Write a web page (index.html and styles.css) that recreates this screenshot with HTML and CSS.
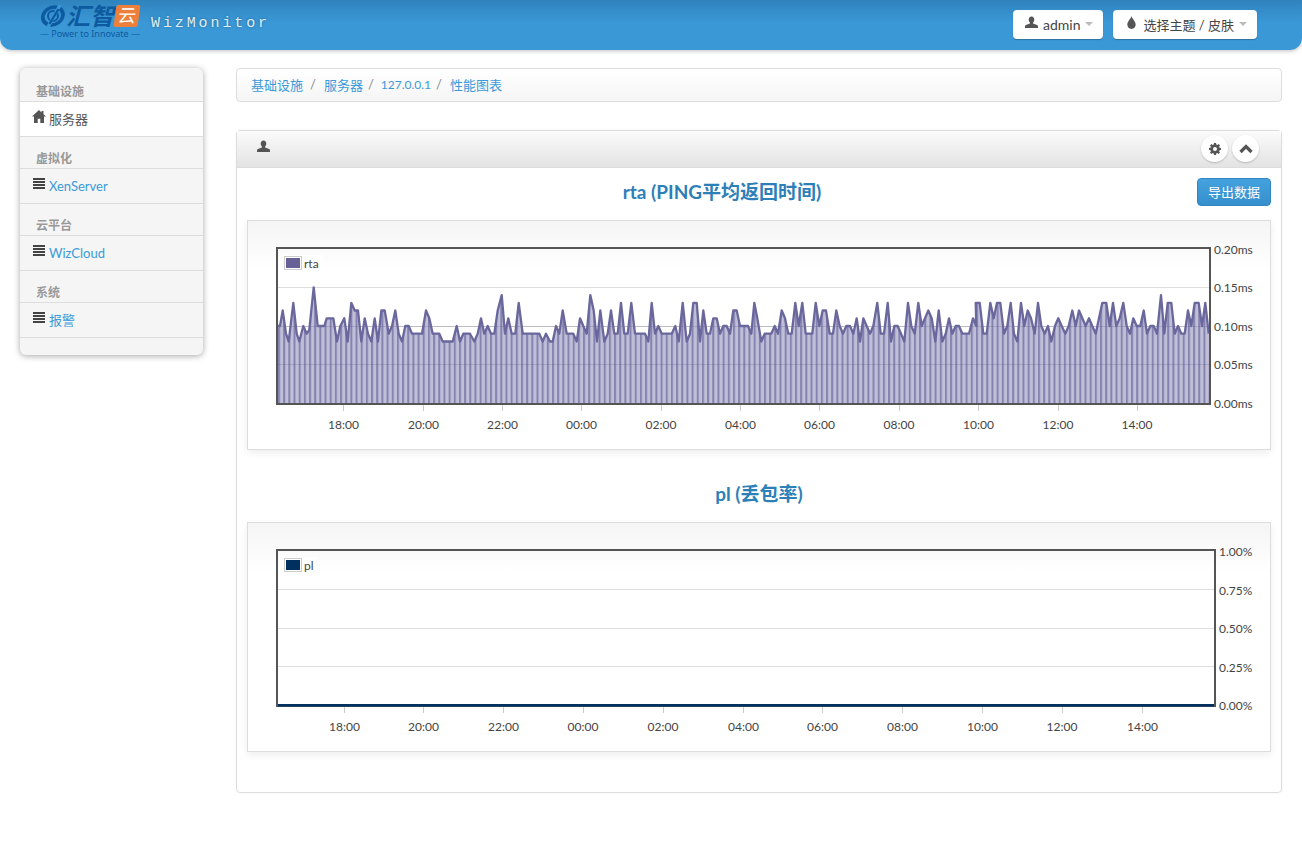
FILE: index.html
```html
<!DOCTYPE html>
<html lang="zh">
<head>
<meta charset="utf-8">
<title>WizMonitor</title>
<link rel="stylesheet" href="styles.css">
</head>
<body>
<header class="topbar">
  <div class="brand">
    <div class="logo">
      <div class="logo-top">
        <svg class="logo-mark" viewBox="0 0 26 24"><ellipse cx="13" cy="12" rx="10" ry="9" fill="none" stroke="#0d5aa0" stroke-width="3.600" transform="skewX(-10) translate(2 0)"/><ellipse cx="13" cy="12" rx="5" ry="5" fill="none" stroke="#0d5aa0" stroke-width="2"/><path d="M20 1 L8 23" stroke="#3b97d6" stroke-width="3.400"/><path d="M18.500 5 L9.500 20" stroke="#0d5aa0" stroke-width="2.400"/></svg>
        <span class="logo-name">汇智</span>
        <span class="logo-cloud">云</span>
      </div>
      <div class="logo-tag">— Power to Innovate —</div>
    </div>
    <span class="app-name">WizMonitor</span>
  </div>
  <div class="top-actions">
    <button class="top-btn">
      <svg class="ico" viewBox="0 0 14 14"><path d="M7 0.5c-2 0-3 1.500-3 3.300 0 1.300.6 2.500 1.300 3.200v1.200L1 9.800c-.6.300-1 .8-1 1.500V13h14v-1.700c0-.7-.4-1.200-1-1.500L8.700 8.200V7C9.400 6.300 10 5.100 10 3.800 10 2 9 .5 7 .5z"/></svg>
      <span>admin</span><i class="caret"></i>
    </button>
    <button class="top-btn">
      <svg class="ico" viewBox="0 0 14 14"><path d="M7 0C6.500 2.500 2.500 6 2.500 9.200 2.500 11.800 4.500 14 7 14s4.500-2.200 4.500-4.800C11.500 6 7.500 2.500 7 0z"/></svg>
      <span class="theme-label">选择主题 / 皮肤</span><i class="caret"></i>
    </button>
  </div>
</header>

<div class="page">
  <aside class="sidebar">
    <div class="nav-head">基础设施</div>
    <a class="nav-item active cjk"><svg class="ico-home" viewBox="0 0 14 13"><path d="M7 0L0 6.500h2V13h3.700V8.800h2.600V13H12V6.500h2L11.500 4.200V1h-2v1.400z"/></svg>服务器</a>
    <div class="nav-head">虚拟化</div>
    <a class="nav-item"><span class="ico-list"></span>XenServer</a>
    <div class="nav-head">云平台</div>
    <a class="nav-item"><span class="ico-list"></span>WizCloud</a>
    <div class="nav-head">系统</div>
    <a class="nav-item cjk"><span class="ico-list"></span>报警</a>
  </aside>

  <main class="content">
    <nav class="crumbs">
      <a>基础设施</a><span class="sep first">/</span><a>服务器</a><span class="sep second">/</span><a class="ip">127.0.0.1</a><span class="sep">/</span><a>性能图表</a>
    </nav>

    <section class="panel">
      <div class="panel-head">
        <svg class="ico panel-user" viewBox="0 0 14 14"><path d="M7 0.500c-2 0-3 1.500-3 3.300 0 1.300.6 2.500 1.300 3.200v1.200L1 9.800c-.6.300-1 .8-1 1.500V13h14v-1.700c0-.7-.4-1.200-1-1.500L8.700 8.200V7C9.400 6.300 10 5.100 10 3.800 10 2 9 .5 7 .5z"/></svg>
        <div class="panel-tools">
          <span class="round-btn"><svg viewBox="0 0 12 12" class="tool"><path d="M5 0h2l.3 1.600 1 .4L9.700 1.100 11 2.400l-.9 1.400.4 1 1.500.2v2l-1.500.3-.4 1 .9 1.300L9.600 11l-1.300-.9-1 .4L7 12H5l-.3-1.500-1-.4-1.300.9L1 9.600l.9-1.300-.4-1L0 7V5l1.500-.2.4-1L1 2.400 2.400 1l1.300.9 1-.4zM6 4a2 2 0 1 0 0 4 2 2 0 0 0 0-4z" fill-rule="evenodd"/></svg></span>
          <span class="round-btn"><svg viewBox="0 0 14 10" class="tool chev"><path d="M1.500 8L7 2.500 12.500 8" fill="none" stroke="#555" stroke-width="3.200"/></svg></span>
        </div>
      </div>
      <div class="panel-body">
        <div class="chart-title-row">
          <h2 class="chart-title">rta (PING平均返回时间)</h2>
          <button class="export">导出数据</button>
        </div>
        <div class="chart-card">
          <svg class="plot" width="1022" height="228" viewBox="248 221 1022 228">
            <defs>
              <pattern id="stripes" patternUnits="userSpaceOnUse" x="278" y="0" width="5.170" height="10">
                <rect width="5.170" height="10" fill="#c0bfd8"/>
                <rect width="2" height="10" fill="#8583af"/>
              </pattern>
            </defs>
            <g class="grid"><path d="M278 287.500H1209M278 326.500H1209M278 364.500H1209"/></g>
            <polygon id="rta-area" fill="url(#stripes)" points=""/>
            <path class="grid-over" d="M278 326.500H1209M278 364.500H1209"/>
            <polyline id="rta-line" class="series" points=""/>
            <rect class="frame" x="277" y="248" width="933" height="156"/>
            <g class="ticks"><path d="M343.500 405v6M423.500 405v6M502.500 405v6M581.500 405v6M661.500 405v6M740.500 405v6M819.500 405v6M899.500 405v6M978.500 405v6M1058.500 405v6M1137.500 405v6"/></g>
            <rect class="legend-bg" x="283" y="255" width="40" height="16"/>
            <rect class="swatch-box" x="284.500" y="256.500" width="17" height="13"/>
            <rect x="286" y="258" width="14" height="10" fill="#666096"/>
            <text class="legend-text" x="304" y="268">rta</text>
            <g class="xlab">
              <text x="343.500" y="429">18:00</text><text x="423.500" y="429">20:00</text><text x="502.500" y="429">22:00</text><text x="581.500" y="429">00:00</text><text x="661" y="429">02:00</text><text x="740.500" y="429">04:00</text><text x="819.500" y="429">06:00</text><text x="899" y="429">08:00</text><text x="978.500" y="429">10:00</text><text x="1058" y="429">12:00</text><text x="1137" y="429">14:00</text>
            </g>
            <g class="ylab">
              <text x="1214" y="254">0.20ms</text><text x="1214" y="292">0.15ms</text><text x="1214" y="330.500">0.10ms</text><text x="1214" y="369">0.05ms</text><text x="1214" y="407.500">0.00ms</text>
            </g>
          </svg>
        </div>
        <div class="chart-title-row second">
          <h2 class="chart-title">pl (丢包率)</h2>
        </div>
        <div class="chart-card">
          <svg class="plot" width="1022" height="228" viewBox="248 523 1022 228">
            <g class="grid"><path d="M278 589.500H1214M278 628.500H1214M278 666.500H1214"/></g>
            <rect class="frame" x="277" y="550" width="938" height="156"/>
            <path class="zero-line" d="M278 705.200H1214"/>
            <g class="ticks"><path d="M344.500 707v6M423.500 707v6M503.500 707v6M583.500 707v6M663.500 707v6M743.500 707v6M822.500 707v6M902.500 707v6M982.500 707v6M1062.500 707v6M1142.500 707v6"/></g>
            <rect class="legend-bg" x="283" y="557" width="34" height="16"/>
            <rect class="swatch-box" x="284.500" y="558.500" width="17" height="13"/>
            <rect x="286" y="560" width="14" height="10" fill="#00305f"/>
            <text class="legend-text" x="304" y="570">pl</text>
            <g class="xlab">
              <text x="344.500" y="731">18:00</text><text x="423.500" y="731">20:00</text><text x="503.500" y="731">22:00</text><text x="583" y="731">00:00</text><text x="663" y="731">02:00</text><text x="743.500" y="731">04:00</text><text x="822.500" y="731">06:00</text><text x="902.500" y="731">08:00</text><text x="982.500" y="731">10:00</text><text x="1062" y="731">12:00</text><text x="1142.500" y="731">14:00</text>
            </g>
            <g class="ylab">
              <text x="1219" y="556">1.00%</text><text x="1219" y="594.500">0.75%</text><text x="1219" y="633">0.50%</text><text x="1219" y="671.500">0.25%</text><text x="1219" y="710">0.00%</text>
            </g>
          </svg>
        </div>
      </div>
    </section>
  </main>
</div>
<script src="chart.js"></script>
</body>
</html>
```
FILE: styles.css
```css
* { box-sizing: border-box; }
html, body { margin: 0; padding: 0; }
body {
  background: #fff;
  color: #444;
  font-family: Lato, "Noto Sans CJK SC", sans-serif;
  font-size: 14px;
  height: 843px;
  overflow: hidden;
}
.topbar {
  height: 50px;
  background: linear-gradient(#2f83bd 0, #3a98d6 45%, #3b98d6 100%);
  border-radius: 0 0 12px 12px;
  box-shadow: 0 1px 4px rgba(0,0,0,.25);
  display: flex;
  align-items: flex-start;
  justify-content: space-between;
  padding: 0 45px 0 40px;
}
.brand { display: flex; align-items: flex-start; gap: 11px; }
.logo { width: 100px; padding-top: 4px; }
.logo-top { display: flex; align-items: center; height: 24px; }
.logo-mark { width: 26px; height: 24px; flex: none; }
.logo-name {
  color: #0d5aa0;
  font-size: 24px;
  line-height: 24px;
  font-weight: 700;
  font-style: italic;
  letter-spacing: 0;
  width: 49px;
  flex: none;
}
.logo-cloud {
  background: #ee7f3b;
  color: #fff;
  font-size: 18px;
  line-height: 21px;
  width: 24px;
  height: 22px;
  text-align: center;
  border-radius: 2px;
  transform: skewX(-8deg);
  flex: none;
}
.logo-tag {
  color: #0d5aa0;
  font: 9px/12px "Noto Sans", sans-serif;
  margin-top: 0;
  white-space: nowrap;
}
.app-name {
  color: #dfeefa;
  font: 15px/20px "Liberation Mono", monospace;
  letter-spacing: 2.900px;
  margin-top: 14px;
  text-shadow: 0 0 3px rgba(0,0,0,.35);
}
.top-actions { display: flex; gap: 10px; padding-top: 10px; }
.top-btn {
  height: 29px;
  background: #fff;
  border: 0;
  border-radius: 4px;
  box-shadow: 0 1px 1px rgba(0,0,0,.25);
  color: #444;
  font: 14px/20px Lato, "Noto Sans CJK SC", sans-serif;
  padding: 0 10px 0 12px;
  display: flex;
  align-items: center;
  gap: 5px;
}
.theme-label { font-size: 13px; }
.ico { width: 13px; height: 13px; fill: #555; flex: none; margin-top: -4px; }
.caret {
  width: 0; height: 0;
  border: 4px solid transparent;
  border-top-color: #bbb;
  border-bottom: 0;
  margin-top: -2px;
}
.page {
  display: flex;
  align-items: flex-start;
  gap: 33px;
  padding: 18px 20px 0;
}
.sidebar {
  width: 183px;
  flex: none;
  background: #f5f5f5;
  border-radius: 6px;
  box-shadow: 0 1px 6px rgba(0,0,0,.35);
  padding: 1px 0 18px;
}
.nav-head {
  height: 32px;
  padding: 15px 0 0 16px;
  color: #999;
  font-size: 12px;
  font-weight: 700;
  line-height: 15px;
}
.nav-item {
  display: flex;
  align-items: center;
  height: 36px;
  margin-bottom: -1px;
  border: solid #ddd;
  border-width: 1px 0;
  padding-left: 13px;
  color: #3a9ad9;
  font-size: 13px;
}
.nav-item.cjk { padding-bottom: 2px; }
.nav-item.cjk .ico-home, .nav-item.cjk .ico-list { margin-top: -3px; }
.nav-item.active { background: #fff; color: #555; }
.ico-home { width: 14px; height: 13px; fill: #555; margin: -5px 3px 0 -1px; flex: none; }
.ico-list {
  width: 12px;
  height: 11px;
  margin: -5px 4px 0 0;
  flex: none;
  background: repeating-linear-gradient(#444 0 2px, transparent 2px 3px);
}
.content { flex: 1; min-width: 0; }
.crumbs {
  height: 34px;
  border: 1px solid #ddd;
  border-radius: 4px;
  background: linear-gradient(#fff, #f5f5f5);
  padding: 0 14px 2px;
  display: flex;
  align-items: center;
  font-size: 13px;
  color: #3a9ad9;
}
.ip { font-size: 12px; }
.sep { color: #888; margin: 0 8px 0 5px; }
.sep.first { margin: 0 8px 0 7px; }
.sep.second { margin: 0 7px 0 5px; }
.panel {
  margin-top: 28px;
  height: 663px;
  border: 1px solid #ddd;
  border-radius: 4px;
  box-shadow: 0 0 3px rgba(0,0,0,.05);
}
.panel-head {
  height: 37px;
  background: linear-gradient(#fbfbfb, #e3e3e3);
  border-bottom: 1px solid #ddd;
  display: flex;
  justify-content: space-between;
  padding: 9px 22px 0 20px;
}
.panel-user { margin-top: 0; }
.panel-tools { display: flex; gap: 4px; margin-top: -5px; }
.round-btn {
  width: 27px;
  height: 27px;
  border-radius: 50%;
  background: #fff;
  box-shadow: 0 1px 2px rgba(0,0,0,.2);
  display: flex;
  align-items: center;
  justify-content: center;
}
.tool { width: 12px; height: 12px; fill: #555; }
.chev { width: 14px; height: 10px; }
.panel-body { padding: 10px 10px 0; }
.chart-title-row { display: flex; align-items: center; height: 28px; margin-bottom: 14px; }
.chart-title-row.second { margin: 30px 0 14px; height: 28px; }
.chart-title {
  flex: 1;
  margin: 0 0 1px;
  text-align: center;
  color: #2d7fb8;
  font-size: 19px;
  font-weight: 700;
  line-height: 26px;
}
.export {
  width: 74px;
  height: 28px;
  background: linear-gradient(#45a2de, #358fcc);
  border: 1px solid #2f86c1;
  border-radius: 4px;
  color: #fff;
  font: 13px/20px Lato, "Noto Sans CJK SC", sans-serif;
  padding: 0;
}
.chart-card {
  height: 230px;
  border: 1px solid #ddd;
  background: linear-gradient(#f5f5f5 0, #fff 50px);
  box-shadow: 0 3px 8px rgba(0,0,0,.07);
}
.plot { display: block; }
.grid path { stroke: #ddd; stroke-width: 1; fill: none; }
.grid-over { stroke: rgba(90,85,130,.25); stroke-width: 1; fill: none; }
.series { fill: none; stroke: #6a679d; stroke-width: 2.300; stroke-linejoin: round; }
.frame { fill: none; stroke: #555; stroke-width: 2; }
.zero-line { stroke: #00305f; stroke-width: 2.600; fill: none; }
.ticks path { stroke: #ccc; stroke-width: 1; fill: none; }
.legend-bg { fill: rgba(255,255,255,.85); }
.swatch-box { fill: #fff; stroke: #ccc; stroke-width: 1; }
.legend-text { font-size: 12px; fill: #444; }
.xlab text { font-size: 12px; fill: #444; text-anchor: middle; }
.ylab text { font-size: 12px; fill: #444; }
```
FILE: chart.js
```js
// rta samples: [pixel offset in a third of a px, value in ms x 100], per 240px slice of the plot.
var slices = [
  [276, [[6,10],[12,10],[20,12],[30,9],[38,8],[52,13],[62,9],[70,8],[82,10],[92,9],[100,9.5],[113,15],[125,10],[145,10],[152,11],[172,11],[183,8],[193,10],[205,11],[215,8],[226,13],[236,12],[246,12],[256,8],[266,11],[276,9],[286,8],[296,11],[306,8],[316,12],[326,12],[338,9],[348,10],[358,12],[368,9],[378,8],[388,10],[398,10],[408,9],[438,9],[450,12],[460,11],[470,9],[490,9],[500,8],[530,8],[542,10],[552,8],[562,9],[582,9],[595,8],[605,9],[615,11],[625,9],[635,10],[645,9],[655,9],[665,12],[677,14],[687,9],[697,11],[707,9]]],
  [510, [[16,9],[26,13],[38,9],[88,9],[98,8],[108,9],[120,8],[128,8],[138,10],[148,9],[158,12],[170,9],[190,9],[200,8],[210,11],[220,10],[230,9],[241,14],[251,12],[261,8],[271,12],[283,8],[293,9],[303,12],[313,9],[323,9],[333,13],[343,9],[353,9],[364,13],[375,9],[405,9],[415,8],[425,13],[435,9],[445,10],[455,9],[485,9],[496,10],[506,8],[518,13],[530,8],[540,9],[550,13],[560,13],[570,8],[580,12],[590,9],[600,9],[610,11],[620,11],[630,9],[640,10],[650,10],[660,9],[670,12],[680,12],[690,10],[710,10]]],
  [744, [[12,10],[22,9],[31,13],[40,11],[52,8],[62,9],[82,9],[92,10],[102,9],[113,12],[123,11],[133,9],[143,9],[154,13],[164,10],[175,13],[185,9],[205,9],[215,13],[226,10],[236,12],[246,12],[257,9],[267,9],[277,12],[287,10],[297,9],[307,10],[318,10],[328,9],[338,11],[348,8],[358,11],[368,10],[378,9],[388,10],[400,13],[410,9],[420,9],[431,13],[441,8],[451,10],[461,10],[471,9],[481,8],[492,13],[502,10],[512,9],[523,13],[533,10],[543,11],[553,12],[563,11],[574,8],[584,12],[595,8],[605,9],[615,11],[625,9],[635,10],[645,10],[655,9],[675,9],[687,11],[697,10]]],
  [978, [[-7,13],[5,13],[16,9],[26,9],[37,13],[47,11],[57,13],[67,13],[78,9],[88,10],[98,13],[108,9],[118,8],[129,13],[139,10],[149,12],[159,11],[170,9],[180,13],[190,10],[200,9],[210,10],[220,8],[231,10],[241,11],[251,10],[262,9],[272,10],[283,12],[293,10],[303,12],[313,11],[323,10],[333,11],[343,10],[353,9],[363,11],[373,13],[385,13],[395,10],[405,13],[415,10],[425,11],[436,13],[446,10],[456,9],[466,11],[476,10],[487,10],[497,12],[507,9],[517,10],[527,10],[537,9],[549,14],[559,9],[569,13],[580,13],[590,9],[600,10],[610,9],[620,9],[630,12],[640,10],[650,13],[662,13],[672,10],[682,13],[692,9]]]
];
var pts = [];
slices.forEach(function (s) {
  s[1].forEach(function (p) {
    pts.push((s[0] + p[0] / 3).toFixed(1) + ',' + (403.3 - p[1] * 7.73).toFixed(1));
  });
});
var line = pts.join(' ');
document.getElementById('rta-line').setAttribute('points', line);
document.getElementById('rta-area').setAttribute('points', '278,404 ' + line + ' 1209,404');
```
